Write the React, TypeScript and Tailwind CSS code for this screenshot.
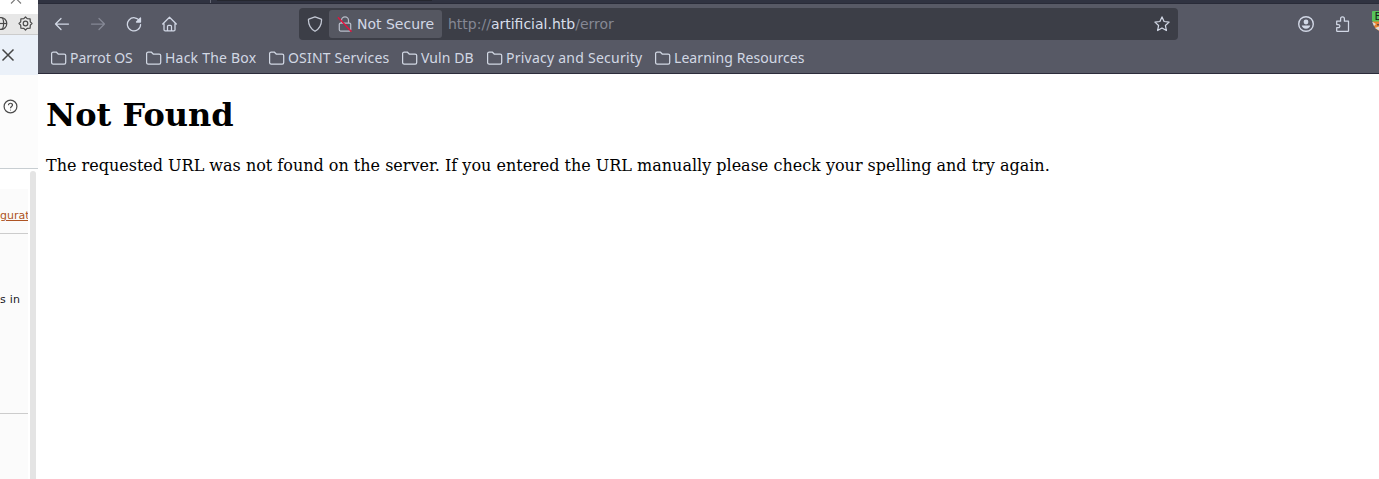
import React from "react";

const bookmarks = [
  { label: "Parrot OS", box: "w-[95px]", spacing: "tracking-[-0.08px]" },
  { label: "Hack The Box", box: "w-[123px]", spacing: "tracking-[0.22px]" },
  { label: "OSINT Services", box: "w-[133px]", spacing: "tracking-[0.18px]" },
  { label: "Vuln DB", box: "w-[85px]", spacing: "tracking-[0.08px]" },
  { label: "Privacy and Security", box: "w-[168px]", spacing: "tracking-[0.24px]" },
  { label: "Learning Resources", box: "w-[160px]", spacing: "tracking-[0.07px]" },
];

function Icon({ children, className = "" }: { children: React.ReactNode; className?: string }) {
  return (
    <svg
      viewBox="0 0 16 16"
      fill="none"
      stroke="currentColor"
      strokeWidth="1.25"
      strokeLinecap="round"
      strokeLinejoin="round"
      className={`block size-4 shrink-0 ${className}`}
    >
      {children}
    </svg>
  );
}

function SidePanel() {
  return (
    <aside className="flex h-full w-[38px] shrink-0 flex-col overflow-hidden bg-white text-[#4a4a4a]">
      <div className="h-[14px] shrink-0 bg-white">
        <svg viewBox="0 0 38 14" className="block h-[14px] w-[38px]" fill="none" stroke="#777" strokeWidth="1.1">
          <path d="M11 3.5 16 -1.5 21 3.5" />
        </svg>
      </div>
      <div className="flex h-[21px] shrink-0 items-center border-b border-[#cccccc] bg-[#e7e7e7]">
        <svg viewBox="0 0 38 20" className="block h-5 w-[38px]" fill="none" stroke="currentColor" strokeWidth="1.2">
          <circle cx="0.8" cy="9.5" r="6" />
          <ellipse cx="0.8" cy="9.5" rx="2.8" ry="6" />
          <path d="M-5 9.5H7" />
          <circle cx="25.5" cy="9.5" r="2.3" />
          <path
            strokeLinejoin="round"
            d="M25.5 3 27.2 4.7 30.1 4.9 30.3 7.8 32 9.5 30.3 11.2 30.1 14.1 27.2 14.3 25.5 16 23.8 14.3 20.9 14.1 20.7 11.2 19 9.5 20.7 7.8 20.9 4.9 23.8 4.7Z"
          />
        </svg>
      </div>
      <div className="h-10 shrink-0 bg-[#ebf1f9]">
        <svg viewBox="0 0 38 40" className="block h-10 w-[38px]" fill="none" stroke="#454545" strokeWidth="1.5">
          <path d="m2.5 14.5 11 11m0-11-11 11" />
        </svg>
      </div>
      <div className="h-[94px] shrink-0 border-b border-[#c8ced2] bg-[#fcfcfc]">
        <svg viewBox="0 0 38 93" className="block h-[93px] w-[38px]" fill="none" stroke="currentColor" strokeWidth="1.2">
          <circle cx="10.5" cy="31.5" r="6.4" />
          <path d="M8.5 30.2c0-2.6 4-2.6 4-.1 0 1.5-2 1.5-2 3.2" />
          <circle cx="10.5" cy="35" r=".5" fill="currentColor" stroke="none" />
        </svg>
      </div>
      <div className="flex min-h-0 flex-1">
        <div className="flex w-7 shrink-0 flex-col overflow-hidden font-['DejaVu_Sans',sans-serif] text-[11px] whitespace-nowrap">
          <div className="h-5 shrink-0 bg-white" />
          <div className="h-[45px] shrink-0 border-b border-[#cccccc] bg-[#fbfbfb] pt-5">
            <div className="text-[11px] leading-[14px] text-[#ae5424] underline">gurat</div>
          </div>
          <div className="h-[180px] shrink-0 border-b border-[#cccccc] bg-[#fbfbfb] pt-[59px]">
            <div className="leading-[14px] tracking-[0.2px] text-[#181824]">s in</div>
          </div>
          <div className="flex-1 bg-[#fbfbfb]" />
        </div>
        <div className="mt-[2px] ml-[2px] w-[6px] rounded-t-full bg-[#e4e4e4]" />
      </div>
    </aside>
  );
}

function Toolbar() {
  return (
    <div className="flex h-10 items-center pl-4 text-[#d2d8e6]">
      <Icon>
        <path d="M14.5 8h-13m5.5-5.5L1.5 8 7 13.5" />
      </Icon>
      <Icon className="ml-5 text-[#858895]">
        <path d="M1.5 8h13M9 2.5 14.5 8 9 13.5" />
      </Icon>
      <Icon className="ml-5">
        <path d="M13.8 5.2A6.6 6.6 0 1 0 14.6 8.5" />
        <path d="M14.5 2v4h-4z" fill="currentColor" />
      </Icon>
      <Icon className="ml-5">
        <path d="M.7 8 7.5 1.2 14.3 8M2 6.7v7q0 1.2 1.2 1.2h8.6q1.2 0 1.2-1.2v-7M5.5 14.8V10.4q0-1 1-1h2q1 0 1 1v4.4" />
      </Icon>
      <div className="ml-[121px] flex h-8 w-[879px] shrink-0 items-center rounded-[4px] bg-[#3c3e47] pr-2 pl-2 font-['DejaVu_Sans',sans-serif] text-[14px]">
        <Icon className="text-[#c3c8d4]">
          <path d="M8 .8 14.2 3.1q.4.2.4.7C14.5 9.3 12.3 13 8 15.3 3.7 13 1.5 9.3 1.4 3.8q0-.5.4-.7Z" />
        </Icon>
        <div className="ml-[6px] flex h-7 w-[113px] shrink-0 items-center rounded-[3px] bg-[#555761] pl-2">
          <Icon className="text-[#b8bdc9]">
            <path d="M4.5 7V4.3a3.5 3.5 0 0 1 7 0V7M3.5 7h9q1.2 0 1.2 1.2v5.6q0 1.2-1.2 1.2h-9q-1.2 0-1.2-1.2V8.2q0-1.2 1.2-1.2" />
            <path d="m1.4 1.8 12.7 13.4" stroke="#e2143f" strokeWidth="1.5" />
          </Icon>
          <span className="ml-1 whitespace-nowrap">Not Secure</span>
        </div>
        <div className="ml-[6px] flex-1 whitespace-nowrap text-[#858894]">
          http://<span className="text-[#d8deeb]">artificial.htb</span>/error
        </div>
        <Icon>
          <path d="m8 .9 2.1 4.6 5 .6-3.7 3.4 1 5L8 12l-4.4 2.5 1-5L.9 6.1l5-.6z" />
        </Icon>
      </div>
      <Icon className="ml-[120px]">
        <circle cx="8" cy="8" r="7.3" strokeWidth="1.4" />
        <circle cx="8" cy="6" r="2.4" fill="currentColor" stroke="none" />
        <path d="M3.7 9.6h8.6C11.8 11.6 10.3 12.8 8 12.8S4.2 11.6 3.7 9.6Z" fill="currentColor" stroke="none" />
      </Icon>
      <Icon className="ml-[21px]">
        <path d="M1.7 5.2h3.9V2.7a1.9 1.9 0 0 1 3.8 0v2.5h4.1v9.5q0 .6-.6.6H2.3q-.6 0-.6-.6v-3h1.6a1.6 1.6 0 0 0 0-3.2H1.7z" />
      </Icon>
      <svg viewBox="0 0 8 22" className="mb-1 ml-[21px] block h-[22px] w-2 shrink-0" aria-hidden="true">
        <path d="M1 10H8v10C4 19 2 16 1 12Z" fill="#e98331" />
        <path d="M0 10.5 4 13 2 15M3 17l5-2v5z" fill="#dedfd8" />
        <path d="M5 13h3v1.5H5z" fill="#694a3a" />
        <rect y="0" width="10" height="10.5" rx="1" fill="#57c35b" />
        <text x="2.5" y="9" fontSize="11" fontFamily="DejaVu Sans" fill="#14251a">B</text>
      </svg>
    </div>
  );
}

export default function App() {
  return (
    <div className="flex h-[479px] w-[1379px] overflow-hidden bg-white">
      <SidePanel />
      <div className="flex w-[1341px] flex-col">
        <header className="h-[74px] shrink-0 border-b border-[#2c2c3b] bg-[#575965]">
          <div className="flex h-1 border-b border-[#292b38] bg-[#303341]">
            <div className="w-[172px]" />
            <div className="w-px bg-[#656875]" />
            <div className="ml-[6px] h-px w-[215px] bg-[#25272f]" />
          </div>
          <Toolbar />
          <nav className="flex h-7 items-center pl-[13px] font-['Noto_Sans',sans-serif] text-[14px] text-[#d2d8e4]">
            {bookmarks.map(({ label, box, spacing }) => (
              <div key={label} className={`flex shrink-0 items-center whitespace-nowrap ${box}`}>
                <Icon>
                  <path d="M.6 12.6V3.6Q.6 2 2.2 2H5.2L7.2 4H13.2Q14.7 4 14.7 5.5V12.6Q14.7 14.2 13.2 14.2H2.2Q.6 14.2.6 12.6Z" />
                </Icon>
                <span className={`mb-[2px] ml-[3px] ${spacing}`}>{label}</span>
              </div>
            ))}
          </nav>
        </header>
        <main className="px-2 font-['DejaVu_Serif',serif] text-black">
          <h1 className="mt-[22px] text-[32px] leading-[38px] font-bold">Not Found</h1>
          <p className="mt-[22px] text-[16px] leading-[19px]">
            The requested URL was not found on the server. If you entered the URL manually please check your spelling and try again.
          </p>
        </main>
      </div>
    </div>
  );
}
